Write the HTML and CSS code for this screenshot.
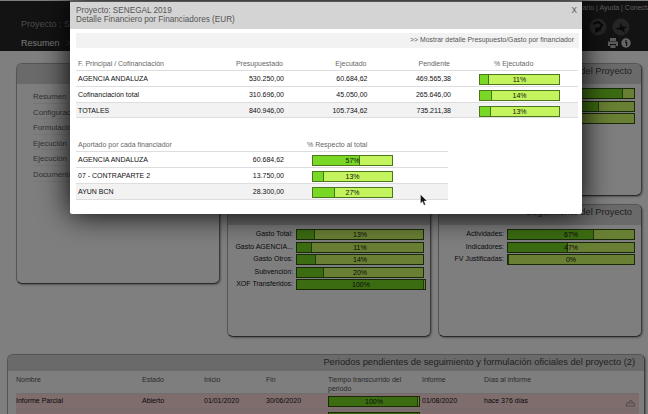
FILE: index.html
```html
<!DOCTYPE html>
<html lang="es">
<head>
  <meta charset="UTF-8">
  <meta name="viewport" content="width=device-width, initial-scale=1.0">
  <title>Detalle Financiero por Financiadores</title>
  <link rel="stylesheet" href="styles.css">
</head>
<body>
  <header class="top">
    <div class="top-left">
      <div class="project">Proyecto : S</div>
      <div class="crumb">Resumen <span>&gt;&gt;</span></div>
    </div>
    <div class="top-right">
      <div class="user-links">Usuario | Ayuda | Conectado</div>
      <div class="round-icons">
        <svg width="18" height="18" viewBox="0 0 18 18"><circle cx="9" cy="9" r="8.5" fill="#4a4a4a"/><path d="M4 6l5-2 4 3-2 3-5 1M6 14l6-3" stroke="#111" stroke-width="2" fill="none"/></svg>
        <svg width="18" height="18" viewBox="0 0 18 18"><circle cx="9" cy="9" r="8.5" fill="#4a4a4a"/><path d="M3 11l5-2V4l2 4 5 1-3 2 1 4-4-3z" fill="#151515"/></svg>
      </div>
      <div class="tool-icons">
        <svg width="10" height="10" viewBox="0 0 10 10"><path d="M2 0h6v3H2zM0 3.5h10V8H8V6H2v2H0zM2.5 7h5v3h-5z" fill="#bbb"/></svg>
        <svg width="10" height="10" viewBox="0 0 10 10"><circle cx="5" cy="5" r="4.7" fill="#ccc"/><path d="M4 4.3h1.6V8M5 2v1.3" stroke="#222" stroke-width="1.3" fill="none"/></svg>
      </div>
    </div>
  </header>

  <main class="board">
    <section class="panel menu-panel">
      <h2></h2>
      <ul class="menu">
        <li>Resumen</li>
        <li>Configuración</li>
        <li>Formulación</li>
        <li>Ejecución</li>
        <li>Ejecución</li>
        <li>Documentos</li>
      </ul>
    </section>
    <div class="column">
      <section class="panel"><h2></h2></section>
      <section class="panel">
        <h2></h2>
        <div class="stats">
          <label>Gasto Total:</label><div class="bar"><i style="width:14.5%"></i><b>13%</b></div>
          <label>Gasto AGENCIA...</label><div class="bar"><i style="width:12%"></i><b>11%</b></div>
          <label>Gasto Otros:</label><div class="bar"><i style="width:15%"></i><b>14%</b></div>
          <label>Subvención:</label><div class="bar"><i style="width:21.5%"></i><b>20%</b></div>
          <label>XOF Transferidos:</label><div class="bar over"><i style="width:99%"></i><b>100%</b></div>
        </div>
      </section>
    </div>
    <div class="column">
      <section class="panel">
        <h2>del Proyecto</h2>
        <div class="stats">
          <label></label><div class="bar"><i style="width:91%"></i></div>
          <label></label><div class="bar"><i style="width:72%"></i></div>
          <label></label><div class="bar"><i style="width:30%"></i></div>
        </div>
      </section>
      <section class="panel">
        <h2>Seguimiento del Proyecto</h2>
        <div class="stats">
          <label>Actividades:</label><div class="bar"><i style="width:68%"></i><b>67%</b></div>
          <label>Indicadores:</label><div class="bar"><i style="width:48%"></i><b>47%</b></div>
          <label>FV Justificadas:</label><div class="bar"><i style="width:1%"></i><b>0%</b></div>
        </div>
      </section>
    </div>
  </main>

  <section class="panel periods">
    <h2>Periodos pendientes de seguimiento y formulación oficiales del proyecto (2)</h2>
    <div class="period-row period-head">
      <span>Nombre</span><span>Estado</span><span>Inicio</span><span>Fin</span>
      <span>Tiempo transcurrido del periodo</span><span>Informe</span><span>Días al informe</span>
    </div>
    <div class="period-row late">
      <span>Informe Parcial</span><span>Abierto</span><span>01/01/2020</span><span>30/06/2020</span>
      <div class="bar"><i style="width:98.5%"></i><b>100%</b></div><span>01/08/2020</span><span>hace 376 días</span>
      <svg width="11" height="8" viewBox="0 0 11 8"><path d="M1 7l1-3h7l1 3zM3 4l3-3 2 3" fill="none" stroke="#999" stroke-width="1"/></svg>
    </div>
    <div class="period-row late">
      <span>Informe Final</span><span>Abierto</span><span>01/07/2020</span><span>31/12/2020</span>
      <div class="bar"><i style="width:98.5%"></i><b>100%</b></div><span>01/07/2020</span><span>hace 42 días</span>
    </div>
  </section>

  <div class="overlay"></div>

  <div class="modal">
    <div class="modal-head">
      <div>Proyecto: SENEGAL 2019<br>Detalle Financiero por Financiadores (EUR)</div>
      <span class="close">X</span>
    </div>
    <div class="modal-link">&gt;&gt; Mostrar detalle Presupuesto/Gasto por financiador</div>

    <div class="grid">
      <div class="row head">
        <span>F. Principal / Cofinanciación</span><span>Presupuestado</span><span>Ejecutado</span><span>Pendiente</span><span>% Ejecutado</span>
      </div>
      <div class="row">
        <span>AGENCIA ANDALUZA</span><span>530.250,00</span><span>60.684,62</span><span>469.565,38</span>
        <div class="bar"><i style="width:12%"></i><b>11%</b></div>
      </div>
      <div class="row">
        <span>Cofinanciación total</span><span>310.696,00</span><span>45.050,00</span><span>265.646,00</span>
        <div class="bar"><i style="width:15%"></i><b>14%</b></div>
      </div>
      <div class="row shaded">
        <span>TOTALES</span><span>840.946,00</span><span>105.734,62</span><span>735.211,38</span>
        <div class="bar"><i style="width:14%"></i><b>13%</b></div>
      </div>
    </div>

    <div class="grid funders">
      <div class="row head">
        <span>Aportado por cada financiador</span><span></span><span>% Respecto al total</span>
      </div>
      <div class="row">
        <span>AGENCIA ANDALUZA</span><span>60.684,62</span>
        <div class="bar"><i style="width:59%"></i><b>57%</b></div>
      </div>
      <div class="row">
        <span>07 - CONTRAPARTE 2</span><span>13.750,00</span>
        <div class="bar"><i style="width:14%"></i><b>13%</b></div>
      </div>
      <div class="row shaded">
        <span>AYUN BCN</span><span>28.300,00</span>
        <div class="bar"><i style="width:28%"></i><b>27%</b></div>
      </div>
    </div>
  </div>

  <svg class="cursor" width="8" height="12" viewBox="0 0 8 12"><path d="M.5 .5v9l2-2 1.5 3.7 1.5-.7L4 7h3z" fill="#111" stroke="#eee" stroke-width=".4"/></svg>
</body>
</html>
```

FILE: styles.css
```css
* {
  box-sizing: border-box;
}

body {
  margin: 0;
  width: 648px;
  height: 414px;
  overflow: hidden;
  background: #fff;
  font: 7px/9px "Liberation Sans", Arial, sans-serif;
  color: #111;
}

h2 {
  margin: 0;
  height: 20px;
  padding-right: 9px;
  background: #d4d4d4;
  border-radius: 5px 5px 0 0;
  font-size: 9.3px;
  font-weight: normal;
  line-height: 15px;
  text-align: right;
  white-space: nowrap;
  color: #444;
}

/* header */
.top {
  display: flex;
  justify-content: space-between;
  height: 51px;
  border-top: 1px solid #fff;
  background: #262626;
  white-space: nowrap;
}

.top-left {
  padding: 17px 0 0 21px;
  font-size: 9px;
  line-height: 12px;
}

.project {
  color: #999;
}

.crumb {
  margin-top: 7px;
  color: #eee;
}

.crumb span {
  margin-left: 4px;
  color: #777;
}

.top-right {
  width: 80px;
  padding-top: 2px;
  color: #bbb;
}

.user-links {
  margin-left: 2px;
}

.round-icons {
  display: flex;
  gap: 5px;
  padding: 6px 0 0 21px;
}

.tool-icons {
  display: flex;
  gap: 3px;
  padding: 2px 0 0 40px;
}

/* panels */
.board {
  display: flex;
  gap: 7px;
  padding: 12px 6px 0 16px;
}

.column {
  display: flex;
  flex-direction: column;
  gap: 8px;
}

.panel {
  width: 204px;
  height: 133px;
  border: 1px solid #aaa;
  border-right-color: #777;
  border-bottom: 1px solid #555;
  border-radius: 6px;
  background: #fdfdfd;
  box-shadow: 1px 1px 2px #aaa;
}

.menu-panel {
  height: 221px;
}

.menu {
  margin: 4px 15px 0 16px;
  padding: 0;
  list-style: none;
  color: #666;
}

.menu li {
  height: 15.6px;
  border-bottom: 1px solid #eee;
  font-size: 7.8px;
  line-height: 17px;
}

.stats {
  display: grid;
  grid-template-columns: 65px 128px;
  gap: 1.5px 3px;
  padding-top: 4px;
}

.stats label {
  height: 11px;
  line-height: 10px;
  text-align: right;
  white-space: nowrap;
}

.bar {
  position: relative;
  height: 11px;
  border: 1px solid #4d761c;
  background: #c3f45d;
  line-height: 9px;
  text-align: center;
}

.bar i {
  position: absolute;
  top: 0;
  left: 0;
  height: 100%;
  background: #78d824;
  border-right: 1px solid #3f7514;
}

.bar b {
  position: relative;
  font-weight: normal;
}

.stats .bar,
.period-row .bar {
  border-color: #335513;
  background: #d2ff66;
}

.stats .over {
  width: 130px;
}

/* periods */
.periods {
  width: 638px;
  height: 80px;
  margin: 17px 0 0 7px;
}

.periods h2 {
  height: 16px;
  line-height: 14px;
}

.period-row {
  display: grid;
  grid-template-columns: 126px 62px 62px 62px 94px 62px 140px 12px;
  height: 15.5px;
  margin: 0 5px 0 8px;
  border-bottom: 1px solid #ddd;
  line-height: 14px;
}

.period-head {
  height: 23px;
  padding-top: 4px;
  line-height: 9px;
  color: #555;
}

.period-head span:nth-child(5) {
  width: 80px;
}

.late {
  background: #ffdada;
}

.late .bar {
  width: 92px;
  margin-top: 2px;
}

.late svg {
  margin: 5px 0 0 1px;
}

/* modal */
.overlay {
  position: absolute;
  inset: 0;
  background: rgba(0, 0, 0, .5);
}

.modal {
  position: absolute;
  top: 1px;
  left: 70px;
  width: 512px;
  height: 213px;
  background: #fff;
  border-radius: 2px;
  box-shadow: 0 0 30px #000;
}

.modal-head {
  display: flex;
  justify-content: space-between;
  height: 28px;
  padding: 4px 5px 0 6px;
  background: #d4d4d4;
  border-top: 1px solid #555;
  font-size: 8.2px;
  line-height: 9px;
  color: #555;
}

.modal-link {
  height: 15px;
  margin: 4px 3px 0 6px;
  padding-right: 5px;
  background: #f2f2f2;
  font-size: 6.9px;
  line-height: 13px;
  text-align: right;
  color: #555;
}

.grid {
  margin: 7px 4px 0 6px;
}

.row {
  display: grid;
  grid-template-columns: 142px 64px 83.5px 83.5px 28px 81px;
  height: 15.8px;
  padding-left: 2px;
  border-bottom: 1px solid #ddd;
  line-height: 16px;
  white-space: nowrap;
}

.row span:nth-child(n+2) {
  text-align: right;
}

.row .bar {
  grid-column: 6;
  margin-top: 3px;
}

.row.head {
  height: 16px;
  line-height: 17px;
  color: #666;
}

.row.head span:nth-child(n+2) {
  padding-right: 1px;
}

.row.head span:nth-child(5) {
  grid-column: 6;
  padding-left: 15px;
  text-align: left;
}

.shaded {
  background: #f2f2f2;
}

.funders {
  width: 372px;
  margin-top: 18px;
}

.funders .row {
  grid-template-columns: 142px 64px 23px 5px 81px;
}

.funders .row .bar {
  grid-column: 5;
}

.funders .row.head span:nth-child(3) {
  grid-column: 4 / 6;
  text-align: left;
}

.cursor {
  position: absolute;
  top: 194px;
  left: 420px;
}
```
